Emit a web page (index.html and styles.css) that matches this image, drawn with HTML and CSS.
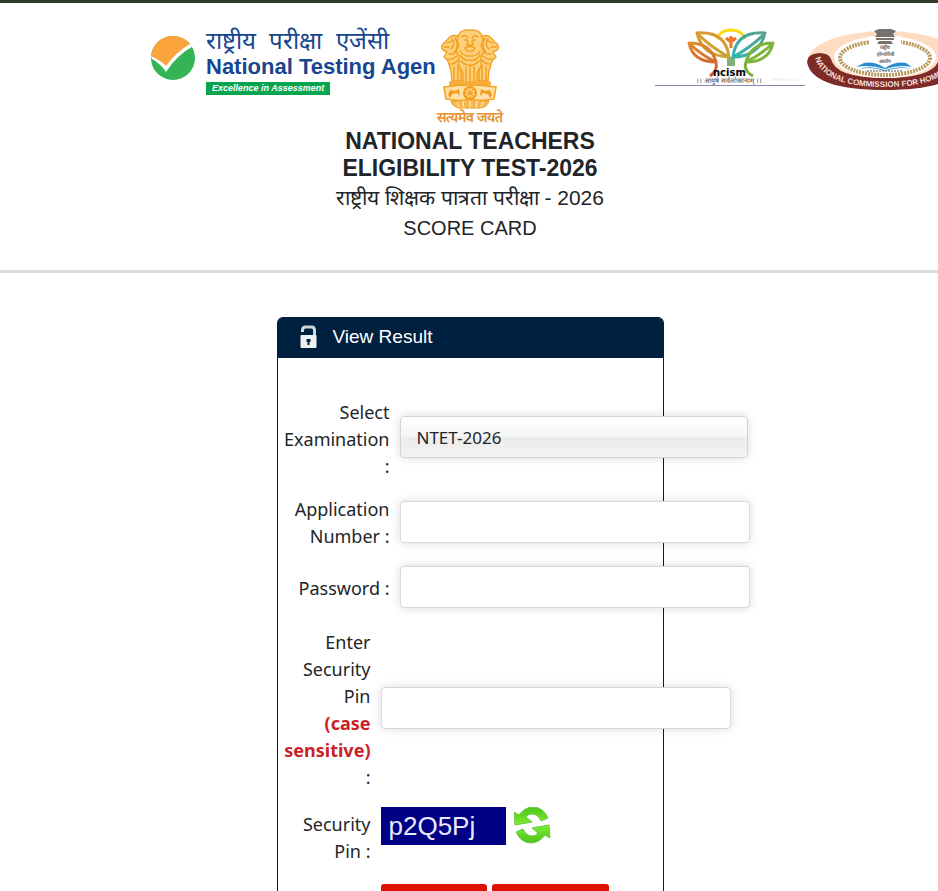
FILE: index.html
```
<!DOCTYPE html>
<html lang="en">
<head>
    <meta charset="UTF-8">
    <meta name="viewport" content="width=device-width, initial-scale=1.0">
    <title>National Teachers Eligibility Test-2026</title>
    <link rel="stylesheet" href="styles.css">
</head>
<body>
<header class="site-header">
    <div class="logo-row">
        <div class="logo-left">
            <svg class="nta-mark" viewBox="0 0 44 44" aria-hidden="true">
                <circle cx="22" cy="22" r="22" fill="#33b455"/>
                <path d="M0 20 A22 22 0 0 1 39 8 Q25 17 15 31 Q9 24 0 20Z" fill="#fba43b"/>
                <path d="M0 20 Q9 24 15 30 Q25 16 39 8 L41 11 Q27 18 15 36 Q9 27 1 23Z" fill="#fff"/>
            </svg>
            <div class="nta-name">
                <span class="nta-hindi" lang="hi">राष्ट्रीय&nbsp; परीक्षा&nbsp; एजेंसी</span>
                <span class="nta-english">National Testing Agen</span>
                <span class="nta-tag">Excellence in Assessment</span>
            </div>
        </div>
        <div class="emblem">
            <svg class="emblem-art" viewBox="0 0 60 80" aria-hidden="true">
                <!-- side lions -->
                <g fill="#fcd07b" stroke="#f5a125" stroke-width="1.4" stroke-linejoin="round">
                    <path d="M19 7 Q11 5 8 10 L3 15 Q0 18 3 21 L7 23 L4 28 L8 32 L11 42 L12 52 L24 52 L25 12Z"/>
                    <path d="M41 7 Q49 5 52 10 L57 15 Q60 18 57 21 L53 23 L56 28 L52 32 L49 42 L48 52 L36 52 L35 12Z"/>
                    <path d="M30 1 Q22 0 19 5 L17 11 L19 17 L16 22 L19 28 L19 38 L23 44 L23 53 L37 53 L37 44 L41 38 L41 28 L44 22 L41 17 L43 11 L41 5 Q38 0 30 1Z"/>
                </g>
                <!-- manes and faces -->
                <g fill="none" stroke="#f39a17" stroke-width="1.3" stroke-linecap="round">
                    <path d="M22 8 Q25 5 28 9 M32 9 Q35 5 38 8 M25 11h2 M33 11h2 M28 12 L27 16 H33 L32 12 M25 19 Q30 16 35 19 Q33 23 30 22 Q27 23 25 19"/>
                    <path d="M20 22 Q24 28 30 27 Q36 28 40 22 M20 26 Q25 33 30 31 Q35 33 40 26 M21 32 Q26 37 30 36 Q34 37 39 32 M26 38 V52 M34 38 V52 M30 37 V52"/>
                    <path d="M7 14 L12 12 M4 18 H9 M12 10 Q16 15 11 20 M15 9 Q20 16 14 24 M9 25 Q14 26 16 22 M8 30 Q13 31 17 27 M11 35 Q15 35 18 31 M14 38 V51 M18 36 V51 M21 40 V51"/>
                    <path d="M53 14 L48 12 M56 18 H51 M48 10 Q44 15 49 20 M45 9 Q40 16 46 24 M51 25 Q46 26 44 22 M52 30 Q47 31 43 27 M49 35 Q45 35 42 31 M46 38 V51 M42 36 V51 M39 40 V51"/>
                </g>
                <!-- abacus -->
                <rect x="9" y="52" width="42" height="5" rx="2" fill="#f7ad3d"/>
                <path d="M4 58 Q30 54 56 58 L54 70 Q30 74 6 70Z" fill="#fde0a6" stroke="#f5a125" stroke-width="1.6"/>
                <circle cx="30" cy="64" r="6" fill="#fcd389" stroke="#f39a17" stroke-width="2"/>
                <path d="M30 58 V70 M24 64 H36 M26 60 L34 68 M34 60 L26 68" stroke="#f39a17" stroke-width="1"/>
                <path d="M8 66 L10 61 L15 62 L19 60 L20 67 L17 64 L12 65 L10 69Z M52 66 L50 61 L45 62 L41 60 L40 67 L43 64 L48 65 L50 69Z" fill="#f39a17"/>
                <path d="M11 72 Q30 69 49 72 Q47 79 39 79 H21 Q13 79 11 72Z" fill="#f8b750" stroke="#f39a17"/>
                <path d="M17 73 L19 78 M23 72 L24 79 M30 72 V79 M37 72 L36 79 M43 73 L41 78" stroke="#fff0d0" stroke-width="1"/>
            </svg>
            <span class="emblem-motto" lang="hi">सत्यमेव जयते</span>
        </div>
        <div class="logo-right">
            <svg class="ncism" viewBox="0 0 150 58" role="img" aria-label="NCISM">
                <defs>
                    <linearGradient id="leafLeft" x1="0" y1="0" x2="1" y2="1">
                        <stop offset="0" stop-color="#d99a2b"/>
                        <stop offset="1" stop-color="#c9a43a"/>
                    </linearGradient>
                    <linearGradient id="leafRight" x1="0" y1="1" x2="1" y2="0">
                        <stop offset="0" stop-color="#2fb3b0"/>
                        <stop offset="1" stop-color="#5aa088"/>
                    </linearGradient>
                    <linearGradient id="stemLeft" x1="0" y1="0" x2="0" y2="1">
                        <stop offset="0" stop-color="#dd8a2d"/>
                        <stop offset="1" stop-color="#cc5530"/>
                    </linearGradient>
                </defs>
                <path d="M62 11 Q65 2 76 2 Q87 2 90 11" fill="none" stroke="#fcdb10" stroke-width="3"/>
                <path d="M72 29 H80 V38 H72Z" fill="#7fae72"/>
                <g fill="none" stroke-width="3" stroke-linejoin="round">
                    <path d="M42 5 Q71 3 74 29 Q47 28 42 5 Q54 18 74 29" stroke="url(#leafLeft)"/>
                    <path d="M110 5 Q81 3 78 29 Q105 28 110 5 Q98 18 78 29" stroke="url(#leafRight)"/>
                    <path d="M34 15 Q56 15 61 34 Q38 34 34 15 Q46 27 61 34 Q63 43 55 48" stroke="url(#stemLeft)"/>
                    <path d="M118 15 Q96 15 91 34 Q114 34 118 15 Q106 27 91 34 Q88 43 98 48" stroke="#7db53c"/>
                </g>
                <path d="M71 10 L76 14 L81 10 M76 14 V20" fill="none" stroke="#ef7623" stroke-width="3"/>
                <circle cx="76" cy="10" r="2" fill="#ef7623"/>
                <text class="ncism-name" x="58" y="48">ncism</text>
                <text class="ncism-line" x="41" y="55" lang="hi">।। आयुषे सर्वलोकानाम् ।।</text>
                <path d="M117 51h14 M117 52h26" stroke="#ededed"/>
                <path d="M0 57.5h150" stroke="#8a86ad"/>
            </svg>
            <svg class="nch" viewBox="0 0 156 63" role="img" aria-label="National Commission for Homoeopathy">
                <ellipse cx="78" cy="32" rx="77" ry="29" fill="#fddcc1"/>
                <path d="M0 34 Q0 26 12 25 Q22 25 24 31 Q28 50 78 50 Q128 50 132 31 Q136 25 145 25 Q156 26 156 34 Q151 62 78 62 Q5 62 0 34Z" fill="#7d2b26"/>
                <ellipse cx="78" cy="29" rx="51" ry="21" fill="#fff"/>
                <ellipse cx="78" cy="30" rx="45" ry="17" fill="none" stroke="#b9985b" stroke-width="4" stroke-dasharray="2 1"/>
                <path d="M62 8h32v12H62z" fill="#fff"/>
                <path d="M67 3 L72 1 H84 L89 3 L86 6 L88 9 H68 L70 6Z M69 10h18v2H69z M72 13h12l2 3H70z" fill="#77716d"/>
                <g class="nch-hindi" lang="hi">
                    <text x="78" y="21">राष्ट्रीय</text>
                    <text x="78" y="28">होम्योपैथी</text>
                    <text x="78" y="35">आयोग</text>
                </g>
                <path d="M78 40 Q67 33 57 35 L49 39 Q63 36 78 41 Q93 36 105 39 L99 35 Q89 33 78 40Z M78 42 Q62 37 51 41 Q65 38 78 43 Q91 38 105 41 Q94 37 78 42Z" fill="#268ccc"/>
                <path d="M60 43h36" stroke="#555" stroke-dasharray="2 1"/>
                <path id="nchArc" d="M8 30 Q16 59 78 59 Q140 59 148 30" fill="none"/>
                <text class="nch-ring"><textPath href="#nchArc">NATIONAL COMMISSION FOR HOMOEO</textPath></text>
            </svg>
        </div>
    </div>
    <h1 class="exam-title">National Teachers<br>Eligibility Test-2026</h1>
    <p class="exam-subtitle exam-hindi" lang="hi">राष्ट्रीय शिक्षक पात्रता परीक्षा - 2026</p>
    <p class="exam-subtitle">SCORE CARD</p>
</header>

<main>
    <form class="result-box">
        <h2 class="result-head">
            <svg class="lock" viewBox="0 0 18 24" aria-hidden="true">
                <path d="M3 7V5Q3 2 6 2H12Q15 2 15 5V11" fill="none" stroke="#cfd5dc" stroke-width="3"/>
                <rect x="1" y="10" width="16" height="13" rx="1" fill="#eef0f2"/>
                <path d="M7 14h4v3h-1v3H8v-3H7z" fill="#002040"/>
            </svg>
            View Result
        </h2>
        <div class="fields">
            <div class="field field-exam">
                <label for="exam">Select Examination :</label>
                <select id="exam">
                    <option>NTET-2026</option>
                </select>
            </div>
            <div class="field">
                <label for="appNo">Application Number :</label>
                <input type="text" id="appNo">
            </div>
            <div class="field">
                <label for="password">Password :</label>
                <input type="password" id="password">
            </div>
            <div class="field field-pin">
                <label for="pin">Enter Security Pin <strong>(case sensitive)</strong> :</label>
                <input type="text" id="pin">
            </div>
            <div class="field field-captcha">
                <span class="field-label">Security Pin :</span>
                <div class="captcha">
                    <span class="captcha-code">p2Q5Pj</span>
                    <button type="button" class="refresh" aria-label="Refresh security pin">
                        <svg viewBox="0 0 38 38" aria-hidden="true">
                            <defs>
                                <linearGradient id="green" x1="0" y1="0" x2="0" y2="1">
                                    <stop offset="0" stop-color="#4cc31b"/>
                                    <stop offset="1" stop-color="#7cf02e"/>
                                </linearGradient>
                            </defs>
                            <path id="arrow" d="M5 8 Q11 0 19 0 Q29 0 34 11 L27 14 Q24 7 18 7 Q14 7 12 10 L18 15 L1 18 L0 5Z" fill="url(#green)" stroke="#6cc946"/>
                            <use href="#arrow" transform="rotate(180 18 18)"/>
                        </svg>
                    </button>
                </div>
            </div>
            <div class="buttons">
                <button type="submit" class="btn btn-submit">Submit</button>
                <button type="reset" class="btn btn-reset">Reset</button>
            </div>
        </div>
    </form>
</main>
</body>
</html>
```
FILE: styles.css
```
* {
    box-sizing: border-box;
}
body {
    margin: 0;
    color: #212529;
    background: #fff;
    font-family: "Noto Sans", "Open Sans", sans-serif;
    font-size: 18px;
    line-height: 27px;
    overflow-x: hidden;
}

/* Header */
.site-header {
    border-top: 3px solid #2e3b2b;
    border-bottom: 3px solid #dadada;
    padding: 24px 0 26px 2px;
    overflow: hidden;
    text-align: center;
    font-family: "Liberation Sans", Arial, sans-serif;
}
.logo-row {
    display: grid;
    grid-template-columns: minmax(0, 1fr) 72px minmax(0, 1fr);
    align-items: start;
}
.logo-left {
    display: flex;
    justify-content: flex-end;
    gap: 11px;
}
.nta-mark {
    width: 44px;
    height: 44px;
    margin-top: 9px;
    flex: none;
}
.nta-name {
    display: flex;
    flex-direction: column;
    align-items: flex-start;
    width: 228px;
    color: #17468f;
    white-space: nowrap;
}
.nta-hindi {
    font-size: 24px;
    font-weight: 500;
    line-height: 28px;
}
.nta-english {
    font-size: 22px;
    font-weight: bold;
    line-height: 24px;
}
.nta-tag {
    margin-top: 3px;
    padding: 0 6px;
    background: #08a551;
    color: #fff;
    font-size: 9px;
    font-weight: bold;
    font-style: italic;
    line-height: 13px;
}
.emblem {
    display: flex;
    flex-direction: column;
    align-items: center;
    padding-top: 2px;
}
.emblem-art {
    width: 64px;
    height: 80px;
}
.emblem-motto {
    color: #e8953a;
    font-size: 14px;
    font-weight: bold;
    line-height: 17px;
    white-space: nowrap;
}
.logo-right {
    display: flex;
    gap: 2px;
    padding-left: 149px;
}
.ncism {
    width: 150px;
    height: 58px;
    flex: none;
    margin-top: 1px;
}
.ncism-name {
    font-family: "DejaVu Sans", sans-serif;
    font-size: 10px;
    font-weight: bold;
}
.ncism-line {
    font-size: 7px;
    fill: #444;
}
.nch {
    width: 156px;
    height: 63px;
    flex: none;
    margin-top: 1px;
}
.nch-hindi {
    font-size: 5px;
    font-weight: bold;
    text-anchor: middle;
    fill: #666;
}
.nch-ring {
    font-size: 8px;
    font-weight: bold;
    fill: #f5ded8;
}
.exam-title {
    margin: 2px 0 0;
    font-size: 23px;
    font-weight: bold;
    line-height: 27px;
    text-transform: uppercase;
}
.exam-subtitle {
    margin: 0;
    font-size: 20px;
    line-height: 31px;
}
.exam-hindi {
    font-size: 21px;
}

/* Result form */
main {
    padding-left: 2px;
}
.result-box {
    width: 387px;
    max-width: 100%;
    margin: 44px auto 40px;
    border: 1px solid #002040;
    border-radius: 6px 6px 0 0;
}
.result-head {
    display: flex;
    align-items: center;
    gap: 15px;
    margin: 0;
    padding: 0 21px 3px;
    height: 40px;
    background: #002040;
    color: #fff;
    border-radius: 4px 4px 0 0;
    font-family: "Liberation Sans", Arial, sans-serif;
    font-size: 19px;
    font-weight: normal;
}
.lock {
    width: 19px;
    height: 24px;
}
.fields {
    display: flex;
    flex-direction: column;
    gap: 16px;
    padding: 41px 0 30px;
}
.field {
    display: grid;
    grid-template-columns: 112px 350px;
    gap: 10px;
    align-items: center;
    text-align: right;
}
.field-pin,
.field-captcha {
    grid-template-columns: 93px 350px;
}
.field-pin {
    margin-top: 3px;
}
.field-captcha {
    align-items: start;
}
.field-label {
    padding-top: 4px;
}
.field strong {
    display: block;
    color: #c92127;
}
.field input,
.field select {
    width: 100%;
    height: 42px;
    margin: 0 0 2px;
    padding: 0 16px;
    background: #fff;
    border: 1px solid #d8d8d8;
    border-radius: 4px;
    box-shadow: 0 0 10px rgba(0, 0, 0, 0.15);
    color: #212529;
    font-family: inherit;
    font-size: 17px;
}
.field select {
    width: 348px;
    margin-bottom: 5px;
    appearance: none;
    background: linear-gradient(#fff 0%, #f6f6f6 48%, #ebebeb 52%, #f3f3f3 100%);
    border-color: #ced4da;
}
.field-pin input {
    margin-bottom: 5px;
}
.captcha {
    display: flex;
    gap: 8px;
}
.captcha-code {
    width: 125px;
    height: 38px;
    padding-left: 8px;
    background: #000084;
    color: #e8e8ff;
    font-family: "Liberation Sans", Arial, sans-serif;
    font-size: 26px;
    line-height: 38px;
    text-align: left;
}
.refresh {
    width: 38px;
    height: 38px;
    padding: 0;
    border: 0;
    background: none;
    cursor: pointer;
}
.refresh svg {
    display: block;
}
.buttons {
    display: flex;
    gap: 5px;
    margin-top: 3px;
    padding-left: 103px;
}
.btn {
    height: 40px;
    padding: 8px 0;
    border: 0;
    border-radius: 3px;
    background: #de1000;
    color: #fff;
    font-family: inherit;
    font-size: 16px;
    cursor: pointer;
}
.btn-submit {
    width: 106px;
}
.btn-reset {
    width: 117px;
}
```
